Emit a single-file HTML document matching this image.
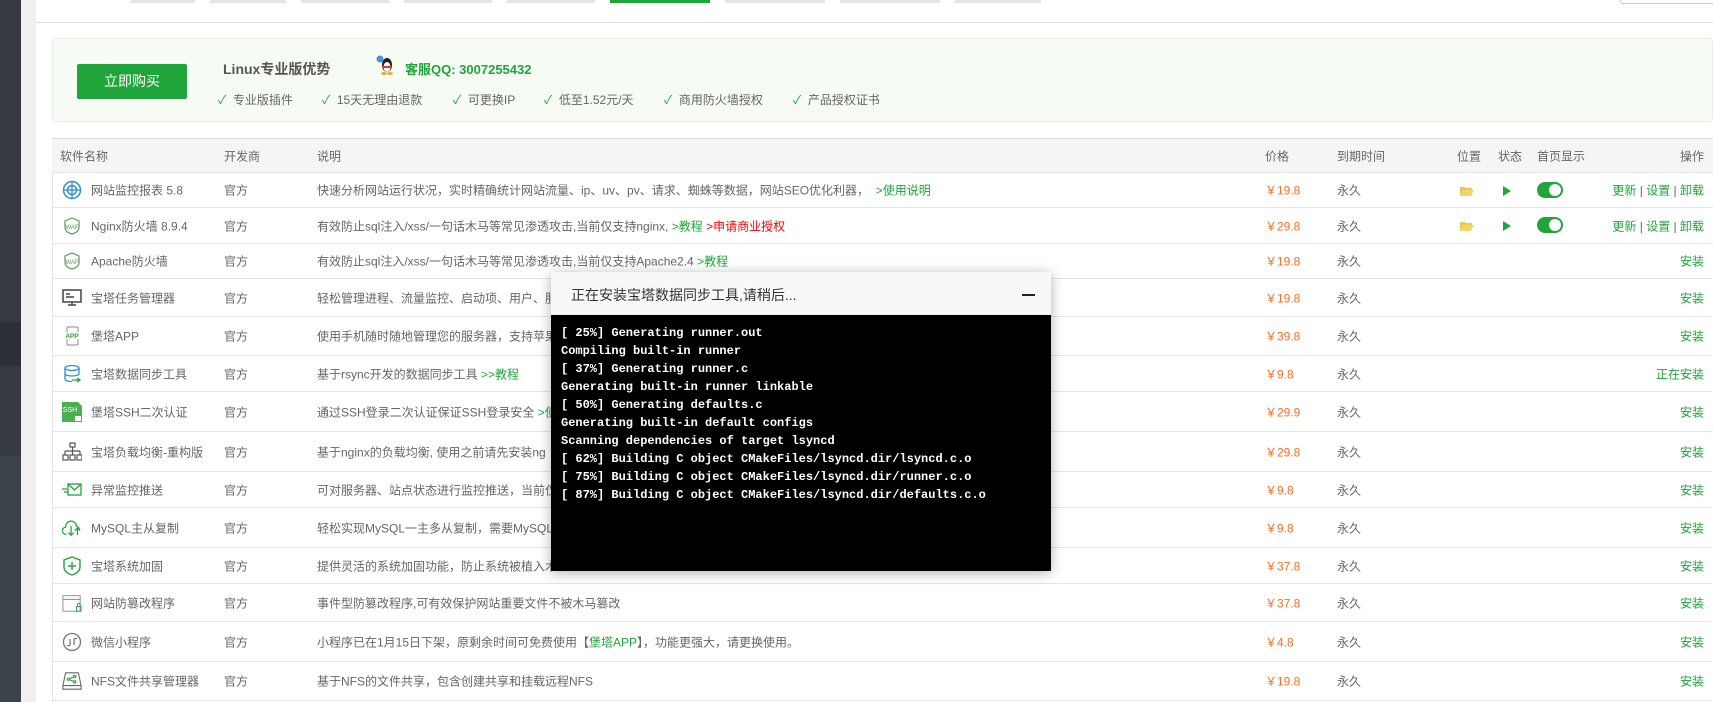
<!DOCTYPE html>
<html><head><meta charset="utf-8"><style>
*{margin:0;padding:0;box-sizing:border-box}
body{width:1713px;height:702px;overflow:hidden;background:#fff;font-family:"Liberation Sans","Noto Sans CJK SC",sans-serif;font-size:12px;color:#666;position:relative}
.a{position:absolute}
.tab{position:absolute;top:0;height:3px;background:#e4e4e4}
.row{position:absolute;left:52px;width:1661px;border-bottom:1px solid #e4e4e4}
.row span{position:absolute;top:50%;transform:translateY(-50%);white-space:nowrap}
.g{color:#20a53a}.r{color:#f00}.p{color:#fc6d26}
.ic{position:absolute;left:10px;top:50%;transform:translateY(-50%);width:20px;height:20px}
.term div{height:18px;line-height:18px;white-space:pre}
</style></head><body>
<!-- sidebar -->
<div class="a" style="left:0;top:0;width:21px;height:322px;background:#343a40"></div>
<div class="a" style="left:0;top:322px;width:21px;height:44px;background:#2b3036"></div>
<div class="a" style="left:0;top:366px;width:21px;height:90px;background:#353b41"></div>
<div class="a" style="left:0;top:456px;width:21px;height:246px;background:#3d434a"></div>
<div class="a" style="left:21px;top:0;width:15px;height:702px;background:#f0f0f0"></div>
<!-- tabs -->
<div class="tab" style="left:131px;width:64px"></div>
<div class="tab" style="left:210px;width:76px"></div>
<div class="tab" style="left:301px;width:88px"></div>
<div class="tab" style="left:404px;width:88px"></div>
<div class="tab" style="left:507px;width:88px"></div>
<div class="tab" style="left:610px;width:100px;background:#20a53a"></div>
<div class="tab" style="left:725px;width:100px"></div>
<div class="tab" style="left:840px;width:100px"></div>
<div class="tab" style="left:955px;width:86px"></div>
<div class="a" style="left:1620px;top:-5px;width:100px;height:9px;border:1px solid #ccc;border-radius:3px"></div>
<div class="a" style="left:36px;top:22px;width:1677px;height:1px;background:#ddd"></div>
<!-- promo -->
<div class="a" style="left:52px;top:38px;width:1661px;height:84px;background:#f6fbf4;border:1px solid #e6eee6;border-radius:3px"></div>
<div class="a" style="left:77px;top:64px;width:110px;height:35px;background:#20a53a;border-radius:2px;color:#fff;font-size:14px;line-height:35px;text-align:center">立即购买</div>
<div class="a" style="left:223px;top:59px;font-size:14px;font-weight:bold;color:#555">Linux专业版优势</div>
<svg class="a" style="left:376px;top:55px" width="18" height="20" viewBox="0 0 18 20"><circle cx="4" cy="4" r="3.5" fill="#4a90d9"/><ellipse cx="11" cy="10" rx="5" ry="7" fill="#222"/><ellipse cx="11" cy="12" rx="3.5" ry="5" fill="#fff"/><rect x="6" y="11" width="10" height="2" fill="#d33"/><ellipse cx="8" cy="18.5" rx="3" ry="1.5" fill="#f5a623"/><ellipse cx="14" cy="18.5" rx="3" ry="1.5" fill="#f5a623"/></svg>
<div class="a" style="left:405px;top:59px;font-size:13px;font-weight:bold;color:#20a53a">客服QQ: 3007255432</div>
<div class="a" style="top:91px;left:218px;color:#666"><span class="g">✓</span>&nbsp; 专业版插件</div>
<div class="a" style="top:91px;left:322px;color:#666"><span class="g">✓</span>&nbsp; 15天无理由退款</div>
<div class="a" style="top:91px;left:453px;color:#666"><span class="g">✓</span>&nbsp; 可更换IP</div>
<div class="a" style="top:91px;left:544px;color:#666"><span class="g">✓</span>&nbsp; 低至1.52元/天</div>
<div class="a" style="top:91px;left:664px;color:#666"><span class="g">✓</span>&nbsp; 商用防火墙授权</div>
<div class="a" style="top:91px;left:793px;color:#666"><span class="g">✓</span>&nbsp; 产品授权证书</div>
<!-- table -->
<div class="a" style="left:52px;top:138px;width:1px;height:564px;background:#e4e4e4"></div>
<div class="row" style="top:138px;height:35px;background:#f5f5f5;border-top:1px solid #ddd">
<span style="left:8px">软件名称</span><span style="left:172px">开发商</span><span style="left:265px">说明</span><span style="left:1213px">价格</span><span style="left:1285px">到期时间</span><span style="left:1405px">位置</span><span style="left:1446px">状态</span><span style="left:1485px">首页显示</span><span style="right:9px">操作</span></div>

<div class="row" style="top:173px;height:35px"><svg class="ic" viewBox="0 0 20 20"><circle cx="10" cy="10" r="8.5" fill="none" stroke="#2d8ed8" stroke-width="1.5"/><circle cx="10" cy="10" r="4.5" fill="none" stroke="#2d8ed8" stroke-width="1.5"/><path d="M1 10h18M10 1v18" stroke="#2d8ed8" stroke-width="1.3"/></svg><span style="left:39px">网站监控报表 5.8</span><span style="left:172px">官方</span><span style="left:265px">快速分析网站运行状况，实时精确统计网站流量、ip、uv、pv、请求、蜘蛛等数据，网站SEO优化利器，&nbsp;&nbsp;<span class="g" style="position:static;transform:none">&gt;使用说明</span></span><span class="p" style="left:1213px">￥19.8</span><span style="left:1285px">永久</span>
<svg class="a" style="left:1408px;top:13px" width="14" height="10" viewBox="0 0 14 10"><path d="M0 1h5l1 1h6v2H3L0 10z" fill="#e8c955"/><path d="M3 4h11l-3 6H0z" fill="#f0d66b"/></svg>
<svg class="a" style="left:1450px;top:12px" width="10" height="12"><path d="M1 1l8 5-8 5z" fill="#20a53a"/></svg>
<div class="a" style="left:1485px;top:9px;width:26px;height:16px;border-radius:8px;background:#20a53a"><div class="a" style="right:2px;top:2px;width:12px;height:12px;border-radius:6px;background:#fff"></div></div>
<span class="g" style="right:9px">更新 <span style="position:static;transform:none;color:#666">|</span> 设置 <span style="position:static;transform:none;color:#666">|</span> 卸载</span></div>

<div class="row" style="top:208px;height:36px"><svg class="ic" viewBox="0 0 20 20"><path d="M10 2l7 3v6c0 4-3 6-7 7-4-1-7-3-7-7V5z" fill="none" stroke="#5a9a5a" stroke-width="1.2"/><text x="10" y="13" font-size="6" text-anchor="middle" fill="#5a9a5a" font-family="Liberation Sans">WAF</text></svg><span style="left:39px">Nginx防火墙 8.9.4</span><span style="left:172px">官方</span><span style="left:265px">有效防止sql注入/xss/一句话木马等常见渗透攻击,当前仅支持nginx, <span class="g" style="position:static;transform:none">&gt;教程</span> <span class="r" style="position:static;transform:none">&gt;申请商业授权</span></span><span class="p" style="left:1213px">￥29.8</span><span style="left:1285px">永久</span>
<svg class="a" style="left:1408px;top:13px" width="14" height="10" viewBox="0 0 14 10"><path d="M0 1h5l1 1h6v2H3L0 10z" fill="#e8c955"/><path d="M3 4h11l-3 6H0z" fill="#f0d66b"/></svg>
<svg class="a" style="left:1450px;top:12px" width="10" height="12"><path d="M1 1l8 5-8 5z" fill="#20a53a"/></svg>
<div class="a" style="left:1485px;top:9px;width:26px;height:16px;border-radius:8px;background:#20a53a"><div class="a" style="right:2px;top:2px;width:12px;height:12px;border-radius:6px;background:#fff"></div></div>
<span class="g" style="right:9px">更新 <span style="position:static;transform:none;color:#666">|</span> 设置 <span style="position:static;transform:none;color:#666">|</span> 卸载</span></div>

<div class="row" style="top:244px;height:35px"><svg class="ic" viewBox="0 0 20 20"><path d="M10 2l7 3v6c0 4-3 6-7 7-4-1-7-3-7-7V5z" fill="none" stroke="#5a9a5a" stroke-width="1.2"/><text x="10" y="13" font-size="6" text-anchor="middle" fill="#5a9a5a" font-family="Liberation Sans">WAF</text></svg><span style="left:39px">Apache防火墙</span><span style="left:172px">官方</span><span style="left:265px">有效防止sql注入/xss/一句话木马等常见渗透攻击,当前仅支持Apache2.4 <span class="g" style="position:static;transform:none">&gt;教程</span></span><span class="p" style="left:1213px">￥19.8</span><span style="left:1285px">永久</span><span class="g" style="right:9px">安装</span></div>

<div class="row" style="top:279px;height:38px"><svg class="ic" viewBox="0 0 20 20"><rect x="1" y="2" width="18" height="12" fill="none" stroke="#444" stroke-width="1.5"/><path d="M4 6h4M4 9h8M6 17h8M10 14v3" stroke="#444" stroke-width="1.5"/></svg><span style="left:39px">宝塔任务管理器</span><span style="left:172px">官方</span><span style="left:265px">轻松管理进程、流量监控、启动项、用户、服务</span><span class="p" style="left:1213px">￥19.8</span><span style="left:1285px">永久</span><span class="g" style="right:9px">安装</span></div>

<div class="row" style="top:317px;height:39px"><svg class="ic" viewBox="0 0 20 20"><rect x="5" y="1" width="11" height="18" rx="1" fill="none" stroke="#888" stroke-width="1"/><rect x="0" y="6" width="20" height="7" fill="#fff"/><text x="10" y="12" font-size="6.5" text-anchor="middle" fill="#20a53a" font-weight="bold" font-family="Liberation Sans">APP</text></svg><span style="left:39px">堡塔APP</span><span style="left:172px">官方</span><span style="left:265px">使用手机随时随地管理您的服务器，支持苹果</span><span class="p" style="left:1213px">￥39.8</span><span style="left:1285px">永久</span><span class="g" style="right:9px">安装</span></div>

<div class="row" style="top:356px;height:36px"><svg class="ic" viewBox="0 0 20 20"><ellipse cx="10" cy="4" rx="7" ry="2.5" fill="none" stroke="#2d8ed8" stroke-width="1.3"/><path d="M3 4v11c0 1.5 3 2.5 7 2.5M17 4v6M3 9.5c0 1.5 3 2.5 7 2.5s7-1 7-2.5" fill="none" stroke="#2d8ed8" stroke-width="1.3"/><path d="M10 16h8M15 14l3 2-3 2" fill="none" stroke="#20a53a" stroke-width="1.3"/></svg><span style="left:39px">宝塔数据同步工具</span><span style="left:172px">官方</span><span style="left:265px">基于rsync开发的数据同步工具 <span class="g" style="position:static;transform:none">&gt;&gt;教程</span></span><span class="p" style="left:1213px">￥9.8</span><span style="left:1285px">永久</span><span class="g" style="right:9px">正在安装</span></div>

<div class="row" style="top:392px;height:40px"><svg class="ic" viewBox="0 0 20 20"><path d="M0 0h16l4 4v16H0z" fill="#4caf50"/><text x="8" y="10" font-size="7" text-anchor="middle" fill="#fff" font-family="Liberation Sans">SSH</text><rect x="13" y="14" width="6" height="5" fill="#fff"/></svg><span style="left:39px">堡塔SSH二次认证</span><span style="left:172px">官方</span><span style="left:265px">通过SSH登录二次认证保证SSH登录安全 <span class="g" style="position:static;transform:none">&gt;使用</span></span><span class="p" style="left:1213px">￥29.9</span><span style="left:1285px">永久</span><span class="g" style="right:9px">安装</span></div>

<div class="row" style="top:432px;height:40px"><svg class="ic" viewBox="0 0 20 20" fill="none" stroke="#555" stroke-width="1.2"><rect x="8" y="1" width="5" height="4"/><path d="M10.5 5v4M3 9h15M3 9v4M10.5 9v4M18 9v4"/><rect x="1" y="13" width="5" height="5"/><rect x="8" y="13" width="5" height="5"/><rect x="15" y="13" width="5" height="5"/></svg><span style="left:39px">宝塔负载均衡-重构版</span><span style="left:172px">官方</span><span style="left:265px">基于nginx的负载均衡, 使用之前请先安装ng</span><span class="p" style="left:1213px">￥29.8</span><span style="left:1285px">永久</span><span class="g" style="right:9px">安装</span></div>

<div class="row" style="top:472px;height:36px"><svg class="ic" viewBox="0 0 20 20" fill="none" stroke="#20a53a" stroke-width="1.3"><rect x="6" y="4" width="13" height="11"/><path d="M6 4l6.5 6 6.5-6M0 9h5M2 12h4"/></svg><span style="left:39px">异常监控推送</span><span style="left:172px">官方</span><span style="left:265px">可对服务器、站点状态进行监控推送，当前仅</span><span class="p" style="left:1213px">￥9.8</span><span style="left:1285px">永久</span><span class="g" style="right:9px">安装</span></div>

<div class="row" style="top:508px;height:40px"><svg class="ic" viewBox="0 0 22 20" fill="none" stroke="#20a53a" stroke-width="1.4"><path d="M5 17a4 4 0 0 1-1-8 6 6 0 0 1 12-1 4 4 0 0 1 3 4"/><path d="M10 8v10M7 15l3 3 3-3M17 18v-8M14 13l3-3 3 3"/></svg><span style="left:39px">MySQL主从复制</span><span style="left:172px">官方</span><span style="left:265px">轻松实现MySQL一主多从复制，需要MySQL</span><span class="p" style="left:1213px">￥9.8</span><span style="left:1285px">永久</span><span class="g" style="right:9px">安装</span></div>

<div class="row" style="top:548px;height:36px"><svg class="ic" viewBox="0 0 20 20" fill="none" stroke="#20a53a" stroke-width="1.4"><path d="M10 1l8 3v7c0 4-4 7-8 8-4-1-8-4-8-8V4z"/><path d="M10 6v8M6 10h8"/></svg><span style="left:39px">宝塔系统加固</span><span style="left:172px">官方</span><span style="left:265px">提供灵活的系统加固功能，防止系统被植入木</span><span class="p" style="left:1213px">￥37.8</span><span style="left:1285px">永久</span><span class="g" style="right:9px">安装</span></div>

<div class="row" style="top:584px;height:38px"><svg class="ic" viewBox="0 0 22 20" fill="none" stroke="#888" stroke-width="1"><path d="M1 2h19v17H1z"/><path d="M1 6h19"/><path d="M17 14v-2a1.5 1.5 0 0 1 3 0v2" stroke="#20a53a"/><rect x="16" y="14" width="5" height="5" stroke="#20a53a"/></svg><span style="left:39px">网站防篡改程序</span><span style="left:172px">官方</span><span style="left:265px">事件型防篡改程序,可有效保护网站重要文件不被木马篡改</span><span class="p" style="left:1213px">￥37.8</span><span style="left:1285px">永久</span><span class="g" style="right:9px">安装</span></div>

<div class="row" style="top:622px;height:40px"><svg class="ic" viewBox="0 0 20 20" fill="none" stroke="#777" stroke-width="1.3"><circle cx="10" cy="10" r="8.5"/><path d="M8 7v6a2 2 0 0 1-3 0M12 13V7a2 2 0 0 1 3 0"/></svg><span style="left:39px">微信小程序</span><span style="left:172px">官方</span><span style="left:265px">小程序已在1月15日下架，原剩余时间可免费使用【<span class="g" style="position:static;transform:none">堡塔APP</span>】，功能更强大，请更换使用。</span><span class="p" style="left:1213px">￥4.8</span><span style="left:1285px">永久</span><span class="g" style="right:9px">安装</span></div>

<div class="row" style="top:662px;height:39px"><svg class="ic" viewBox="0 0 22 20" fill="none" stroke="#666" stroke-width="1.2"><path d="M4 1h14l3 14H1z"/><path d="M1 15v4h20v-4"/><circle cx="7" cy="8" r="1.3" stroke="#20a53a"/><circle cx="14" cy="5" r="1.3" stroke="#20a53a"/><circle cx="14" cy="11" r="1.3" stroke="#20a53a"/><path d="M8 7.5l5-2M8 8.5l5 2" stroke="#20a53a"/></svg><span style="left:39px">NFS文件共享管理器</span><span style="left:172px">官方</span><span style="left:265px">基于NFS的文件共享，包含创建共享和挂载远程NFS</span><span class="p" style="left:1213px">￥19.8</span><span style="left:1285px">永久</span><span class="g" style="right:9px">安装</span></div>

<!-- modal -->
<div class="a" style="left:551px;top:272px;width:500px;height:299px;background:#000;box-shadow:0 2px 12px rgba(0,0,0,.3)">
<div style="height:43px;background:#f8f8f8;border-bottom:1px solid #eee;position:relative"><div style="position:absolute;left:20px;top:13px;font-size:14px;color:#333">正在安装宝塔数据同步工具,请稍后...</div><div style="position:absolute;left:471px;top:22px;width:13px;height:2px;background:#222"></div></div>
<div class="term" style="position:absolute;left:10px;top:52px;color:#fff;font-family:'Liberation Mono',monospace;font-size:12px;font-weight:bold">
<div>[ 25%] Generating runner.out</div><div>Compiling built-in runner</div><div>[ 37%] Generating runner.c</div><div>Generating built-in runner linkable</div><div>[ 50%] Generating defaults.c</div><div>Generating built-in default configs</div><div>Scanning dependencies of target lsyncd</div><div>[ 62%] Building C object CMakeFiles/lsyncd.dir/lsyncd.c.o</div><div>[ 75%] Building C object CMakeFiles/lsyncd.dir/runner.c.o</div><div>[ 87%] Building C object CMakeFiles/lsyncd.dir/defaults.c.o</div>
</div></div>
</body></html>
